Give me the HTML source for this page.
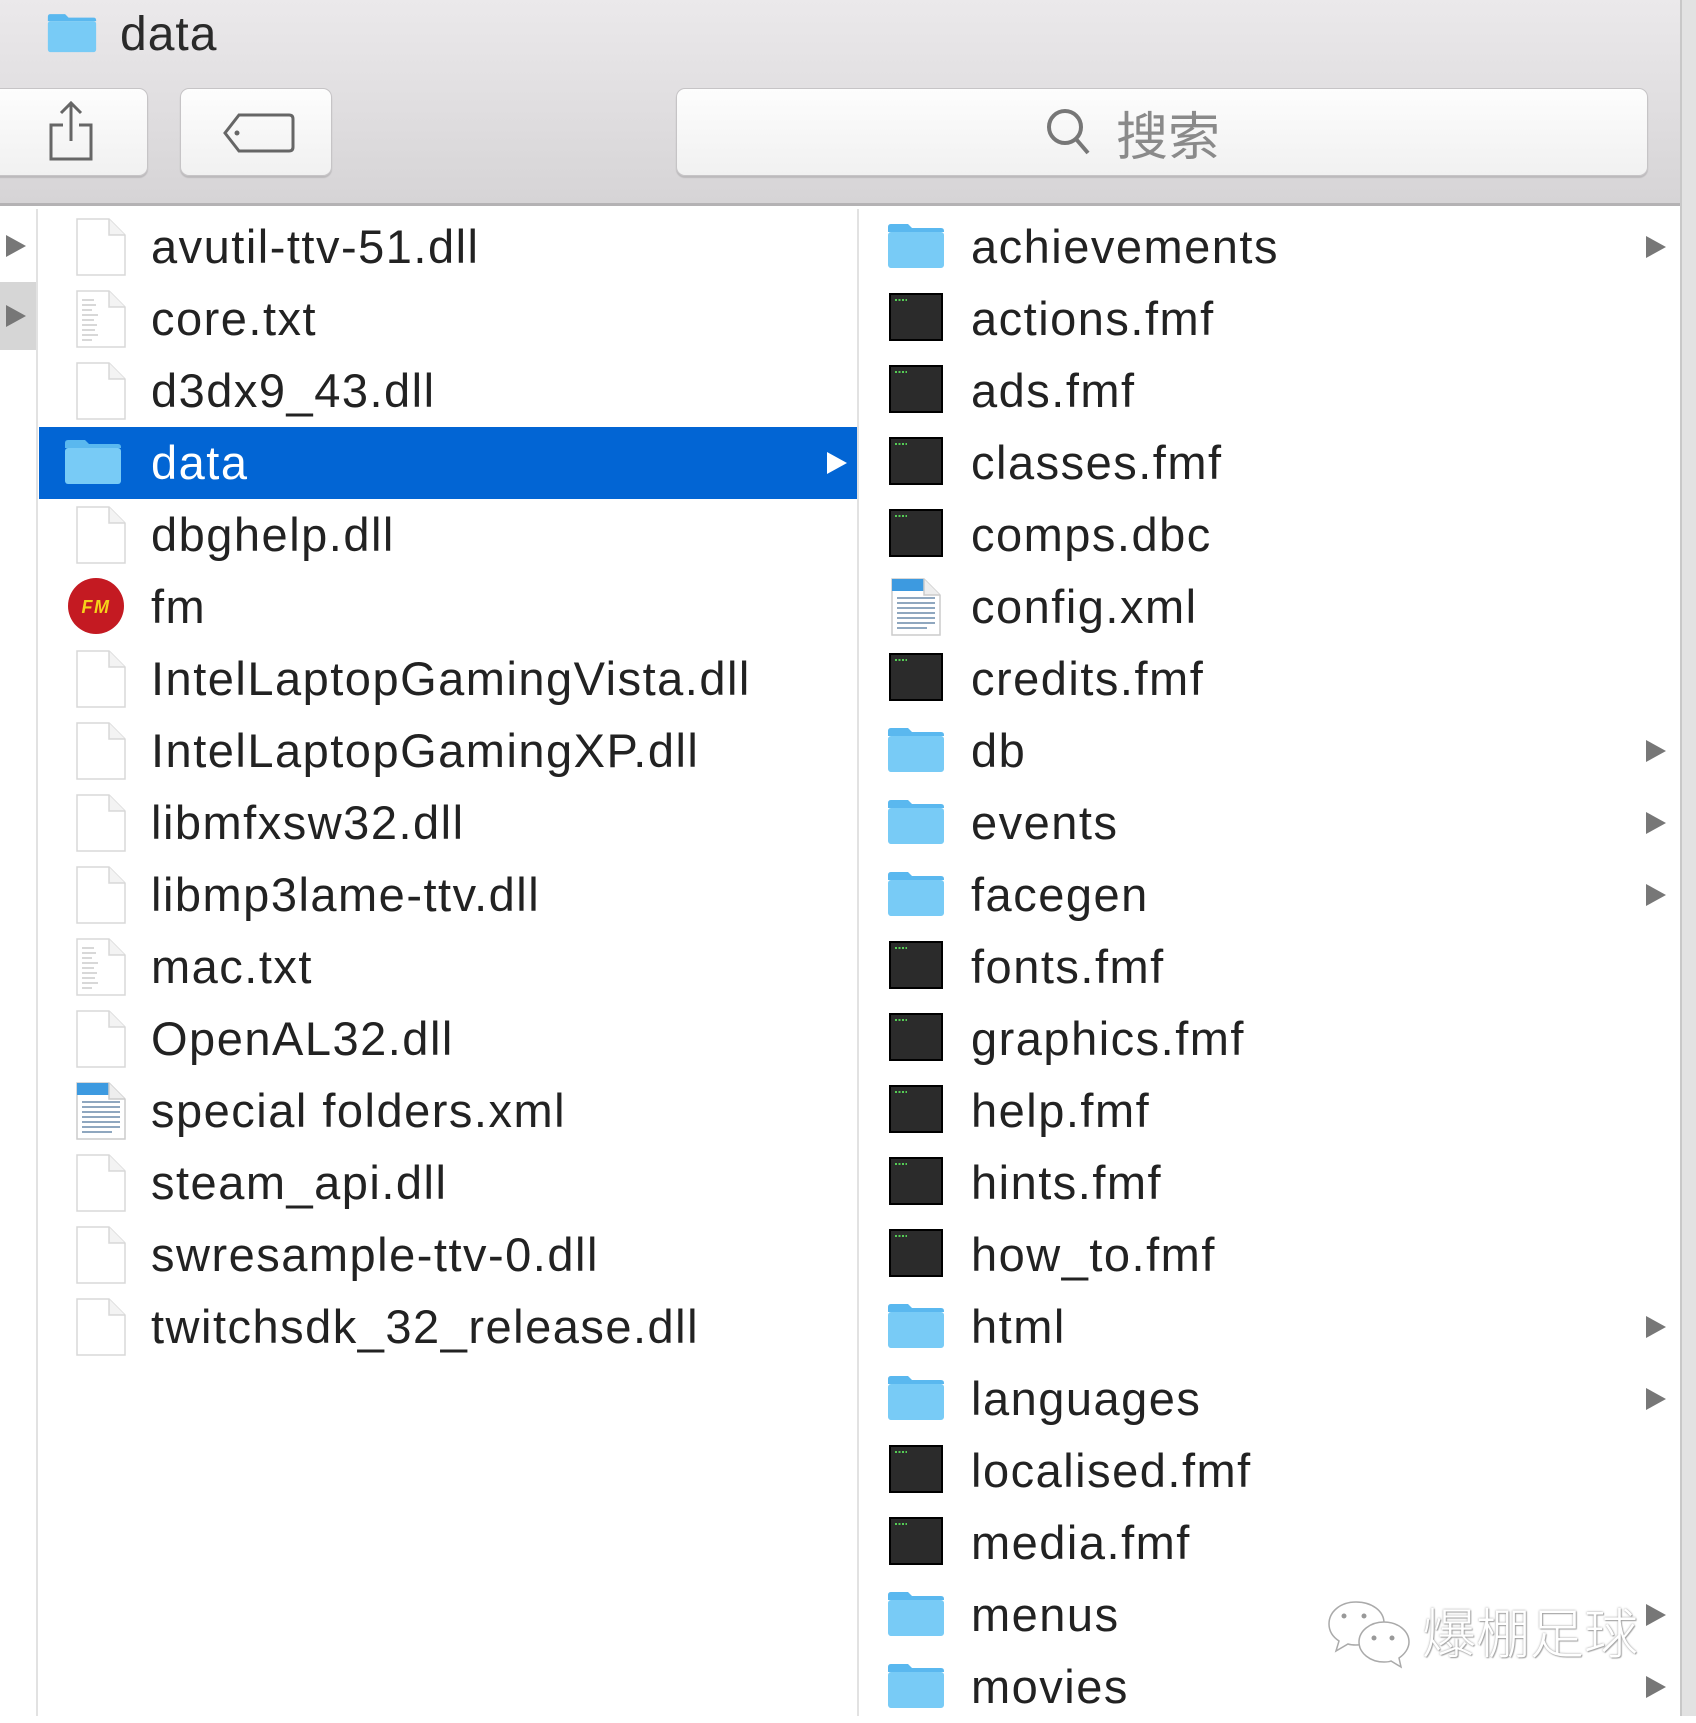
<!DOCTYPE html>
<html><head><meta charset="utf-8"><style>
*{margin:0;padding:0;box-sizing:border-box}
body{width:1696px;height:1716px;overflow:hidden;background:#fff;font-family:"Liberation Sans","Noto Sans CJK SC",sans-serif;position:relative}
#tb{position:absolute;left:0;top:0;width:1680px;height:206px;background:linear-gradient(#ebe9eb,#d6d4d6);border-bottom:3px solid #b4b2b4}
.title{position:absolute;left:120px;top:2px;font-size:48px;line-height:66px;color:#2a2a2a;letter-spacing:1px}
.btn{position:absolute;top:88px;height:88px;background:linear-gradient(#fdfdfd,#f1f1f1);border:1px solid #c6c4c6;border-radius:9px;box-shadow:0 2px 1px #bcbabc}
.search{font-size:52px;color:#8a8a8a;display:flex;align-items:center;justify-content:center;padding-right:60px}
#sb{position:absolute;left:1680px;top:0;width:16px;height:1716px;background:#e2e2e2;border-left:2px solid #c8c8c8}
.prev{position:absolute;left:0;top:209px;width:38px;height:1507px;background:#fff;border-right:2px solid #e2e2e2}
.div{position:absolute;left:857px;top:209px;width:2px;height:1507px;background:#e2e2e2}
.r{position:absolute;height:72px;font-size:47px;line-height:72px;color:#222;white-space:nowrap;letter-spacing:1.5px}
.l{left:39px;width:818px;padding-left:112px}
.rt{left:859px;width:821px;padding-left:112px}
.sel{background:#0265d4;color:#fff}
.r svg.i{position:absolute;top:7px}
.l svg.i{left:32px}
.rt svg.i{left:27px}
.arr{position:absolute;right:14px;top:25px;width:0;height:0;border-left:20px solid #777;border-top:11px solid transparent;border-bottom:11px solid transparent}
.sel .arr{border-left-color:#fff;right:10px}
.pa{position:absolute;left:6px;width:0;height:0;border-left:20px solid #777;border-top:11px solid transparent;border-bottom:11px solid transparent}
.wm{position:absolute;left:1422px;top:1590px;font-size:54px;color:#fff;text-shadow:0 0 2px #999,1px 1px 1px #aaa;font-weight:300}
</style></head><body>
<svg width="0" height="0" style="position:absolute">
<defs>
<symbol id="doc" viewBox="0 0 60 58"><path d="M6 1h32l16 16v40H6z" fill="#fff" stroke="#d8d8d8" stroke-width="1.5"/><path d="M38 1v16h16" fill="#f3f3f3" stroke="#d8d8d8" stroke-width="1.5"/></symbol>
<symbol id="txt" viewBox="0 0 60 58"><path d="M6 1h32l16 16v40H6z" fill="#fff" stroke="#d8d8d8" stroke-width="1.5"/><path d="M38 1v16h16" fill="#f3f3f3" stroke="#d8d8d8" stroke-width="1.5"/><g stroke="#ccc" stroke-width="1.5"><path d="M11 10h12M11 15h14M11 20h10M11 25h16M11 30h12M11 35h15M11 40h13M11 45h16M11 50h10"/></g></symbol>
<symbol id="xml" viewBox="0 0 60 58"><path d="M6 1h32l16 16v40H6z" fill="#fff" stroke="#ccc" stroke-width="1.5"/><path d="M6 1h32v12H6z" fill="#3d9ae0"/><path d="M38 1v16h16" fill="#eee" stroke="#ccc" stroke-width="1.5"/><g stroke="#6a8aaa" stroke-width="1.6"><path d="M11 20h38M11 25h38M11 30h38M11 35h38M11 40h38M11 45h38M11 50h30"/></g></symbol>
<symbol id="fold" viewBox="0 0 60 58"><path d="M2 14V9q0-3 3-3h17l4 4h29q3 0 3 3v1z" fill="#5ab8ef"/><rect x="2" y="14" width="56" height="36" rx="3" fill="#78cbf6"/></symbol>
<symbol id="exe" viewBox="0 0 60 58"><rect x="4" y="4" width="52" height="46" fill="#2b2b2b" stroke="#000" stroke-width="2"/><path d="M9 10h12" stroke="#5c5" stroke-width="2" stroke-dasharray="2 1.5"/></symbol>
</defs></svg>

<div id="tb">
<svg style="position:absolute;left:40px;top:9px" width="64" height="50" viewBox="0 0 60 58"><use href="#fold"/></svg>
<div class="title">data</div>
<div class="btn" style="left:-10px;width:158px"><svg style="position:absolute;left:55px;top:10px" width="50" height="64" viewBox="0 0 50 64"><path d="M25 4v38M15 14l10-10 10 10M17 26H5v34h40V26H33" fill="none" stroke="#666" stroke-width="3"/></svg></div>
<div class="btn" style="left:180px;width:152px"><svg style="position:absolute;left:40px;top:22px" width="76" height="44" viewBox="0 0 76 44"><path d="M18 4h50q4 0 4 4v28q0 4-4 4H18L4 22z" fill="none" stroke="#666" stroke-width="3"/><circle cx="16" cy="22" r="2.5" fill="#666"/></svg></div>
<div class="btn search" style="left:676px;width:972px"><svg width="50" height="52" viewBox="0 0 50 52" style="margin-right:22px"><circle cx="21" cy="21" r="16" fill="none" stroke="#777" stroke-width="4"/><path d="M32 33l12 14" stroke="#777" stroke-width="4"/></svg>搜索</div>
</div>
<div id="sb"></div>
<div class="prev"><div style="position:absolute;left:0;top:73px;width:36px;height:68px;background:#d6d6d6"></div><div class="pa" style="top:26px"></div><div class="pa" style="top:96px"></div></div>
<div class="div"></div>

<div class="r l" style="top:211px"><svg class="i" width="60" height="58"><use href="#doc"/></svg>avutil-ttv-51.dll</div>
<div class="r l" style="top:283px"><svg class="i" width="60" height="58"><use href="#txt"/></svg>core.txt</div>
<div class="r l" style="top:355px"><svg class="i" width="60" height="58"><use href="#doc"/></svg>d3dx9_43.dll</div>
<div class="r l sel" style="top:427px"><svg class="i" width="60" height="58" style="left:24px"><use href="#fold"/></svg>data<div class="arr"></div></div>
<div class="r l" style="top:499px"><svg class="i" width="60" height="58"><use href="#doc"/></svg>dbghelp.dll</div>
<div class="r l" style="top:571px"><svg class="i" width="60" height="58" viewBox="0 0 60 58" style="left:27px"><circle cx="30" cy="28" r="28" fill="#c41a22"/><text x="30" y="35" font-size="18" font-weight="bold" font-style="italic" fill="#f5d21a" text-anchor="middle" font-family="Liberation Sans">FM</text></svg>fm</div>
<div class="r l" style="top:643px"><svg class="i" width="60" height="58"><use href="#doc"/></svg>IntelLaptopGamingVista.dll</div>
<div class="r l" style="top:715px"><svg class="i" width="60" height="58"><use href="#doc"/></svg>IntelLaptopGamingXP.dll</div>
<div class="r l" style="top:787px"><svg class="i" width="60" height="58"><use href="#doc"/></svg>libmfxsw32.dll</div>
<div class="r l" style="top:859px"><svg class="i" width="60" height="58"><use href="#doc"/></svg>libmp3lame-ttv.dll</div>
<div class="r l" style="top:931px"><svg class="i" width="60" height="58"><use href="#txt"/></svg>mac.txt</div>
<div class="r l" style="top:1003px"><svg class="i" width="60" height="58"><use href="#doc"/></svg>OpenAL32.dll</div>
<div class="r l" style="top:1075px"><svg class="i" width="60" height="58"><use href="#xml"/></svg>special folders.xml</div>
<div class="r l" style="top:1147px"><svg class="i" width="60" height="58"><use href="#doc"/></svg>steam_api.dll</div>
<div class="r l" style="top:1219px"><svg class="i" width="60" height="58"><use href="#doc"/></svg>swresample-ttv-0.dll</div>
<div class="r l" style="top:1291px"><svg class="i" width="60" height="58"><use href="#doc"/></svg>twitchsdk_32_release.dll</div>

<div class="r rt" style="top:211px"><svg class="i" width="60" height="58"><use href="#fold"/></svg>achievements<div class="arr"></div></div>
<div class="r rt" style="top:283px"><svg class="i" width="60" height="58"><use href="#exe"/></svg>actions.fmf</div>
<div class="r rt" style="top:355px"><svg class="i" width="60" height="58"><use href="#exe"/></svg>ads.fmf</div>
<div class="r rt" style="top:427px"><svg class="i" width="60" height="58"><use href="#exe"/></svg>classes.fmf</div>
<div class="r rt" style="top:499px"><svg class="i" width="60" height="58"><use href="#exe"/></svg>comps.dbc</div>
<div class="r rt" style="top:571px"><svg class="i" width="60" height="58"><use href="#xml"/></svg>config.xml</div>
<div class="r rt" style="top:643px"><svg class="i" width="60" height="58"><use href="#exe"/></svg>credits.fmf</div>
<div class="r rt" style="top:715px"><svg class="i" width="60" height="58"><use href="#fold"/></svg>db<div class="arr"></div></div>
<div class="r rt" style="top:787px"><svg class="i" width="60" height="58"><use href="#fold"/></svg>events<div class="arr"></div></div>
<div class="r rt" style="top:859px"><svg class="i" width="60" height="58"><use href="#fold"/></svg>facegen<div class="arr"></div></div>
<div class="r rt" style="top:931px"><svg class="i" width="60" height="58"><use href="#exe"/></svg>fonts.fmf</div>
<div class="r rt" style="top:1003px"><svg class="i" width="60" height="58"><use href="#exe"/></svg>graphics.fmf</div>
<div class="r rt" style="top:1075px"><svg class="i" width="60" height="58"><use href="#exe"/></svg>help.fmf</div>
<div class="r rt" style="top:1147px"><svg class="i" width="60" height="58"><use href="#exe"/></svg>hints.fmf</div>
<div class="r rt" style="top:1219px"><svg class="i" width="60" height="58"><use href="#exe"/></svg>how_to.fmf</div>
<div class="r rt" style="top:1291px"><svg class="i" width="60" height="58"><use href="#fold"/></svg>html<div class="arr"></div></div>
<div class="r rt" style="top:1363px"><svg class="i" width="60" height="58"><use href="#fold"/></svg>languages<div class="arr"></div></div>
<div class="r rt" style="top:1435px"><svg class="i" width="60" height="58"><use href="#exe"/></svg>localised.fmf</div>
<div class="r rt" style="top:1507px"><svg class="i" width="60" height="58"><use href="#exe"/></svg>media.fmf</div>
<div class="r rt" style="top:1579px"><svg class="i" width="60" height="58"><use href="#fold"/></svg>menus<div class="arr"></div></div>
<div class="r rt" style="top:1651px"><svg class="i" width="60" height="58"><use href="#fold"/></svg>movies<div class="arr"></div></div>

<svg style="position:absolute;left:1326px;top:1598px" width="90" height="74" viewBox="0 0 90 74"><g fill="#fff" stroke="#aaa" stroke-width="1.5"><path d="M30 4C14 4 3 14 3 26c0 7 4 13 10 17l-3 10 12-7c3 1 6 1 8 1 16 0 28-10 28-22S46 4 30 4z"/><path d="M58 24c-14 0-25 9-25 20s11 20 25 20c3 0 5 0 7-1l10 6-2-9c6-4 10-10 10-16 0-11-11-20-25-20z"/></g><g fill="#999"><circle cx="18" cy="18" r="2.5"/><circle cx="38" cy="18" r="2.5"/><circle cx="48" cy="40" r="2.5"/><circle cx="66" cy="40" r="2.5"/></g></svg>
<div class="wm">爆棚足球</div>
</body></html>
